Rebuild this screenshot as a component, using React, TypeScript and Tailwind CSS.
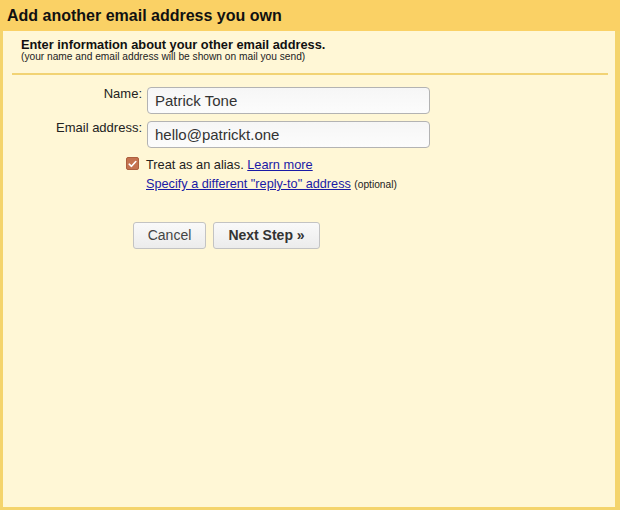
import React from "react";

const font = { fontFamily: '"Liberation Sans", Arial, sans-serif' };

export default function App() {
  return (
    <div className="w-[620px] h-[510px] flex flex-col text-black" style={font}>
      <div className="h-[31px] bg-[#fad165] pl-[7px] text-[16px] font-bold leading-[31px] text-[#111]">
        Add another email address you own
      </div>
      <div className="flex-1 flex flex-col bg-[#fff7d6] border-l-[3px] border-r-[5px] border-b-[3px] border-[#f4d46c]">
        <div className="pl-[18px] pt-[7px]">
          <div className="text-[12.8px] font-bold leading-[14px] text-[#111]">
            Enter information about your other email address.
          </div>
          <div className="text-[10.2px] leading-[10px] text-[#222]">
            (your name and email address will be shown on mail you send)
          </div>
        </div>
        <div className="mt-[11px] ml-[9px] mr-[7px] h-[2px] bg-[#f2d374]" />
        <div className="mt-[12px] flex flex-col">
          <div className="flex items-start gap-[5px]">
            <div className="w-[139px] text-right text-[13px] leading-[13px] text-[#222]">Name:</div>
            <div className="w-[283px] h-[27px] rounded-[4px] border border-[#b3b3b3] bg-gradient-to-b from-[#f6f6f6] to-[#fcfcfc] pl-[7px] text-[15px] leading-[25px] text-[#333]">
              Patrick Tone
            </div>
          </div>
          <div className="mt-[7px] flex items-start gap-[5px]">
            <div className="w-[139px] text-right text-[13px] leading-[13px] text-[#222]">Email address:</div>
            <div className="w-[283px] h-[27px] rounded-[4px] border border-[#b3b3b3] bg-gradient-to-b from-[#f6f6f6] to-[#fcfcfc] pl-[7px] text-[15px] leading-[25px] text-[#333]">
              hello@patrickt.one
            </div>
          </div>
          <div className="mt-[9px] flex items-start gap-[4px]">
            <div className="w-[139px] flex justify-end pr-[3px]">
              <div className="w-[13px] h-[13px] rounded-[2px] bg-[#c4724f] border border-[#ad5f3e] flex items-center justify-center">
                <svg width="9" height="8" viewBox="0 0 9 8">
                  <path d="M1.2 4.2 L3.5 6.3 L7.8 1.5" stroke="#ffffff" strokeWidth="1.6" fill="none" strokeLinecap="round" strokeLinejoin="round" />
                </svg>
              </div>
            </div>
            <div className="text-[12.8px] leading-[15px] text-[#222]">
              Treat as an alias.{" "}
              <span className="text-[#1a1aa6] underline">Learn more</span>
            </div>
          </div>
          <div className="mt-[5px] pl-[143px] text-[12.7px] leading-[15px]">
            <span className="text-[#1a1aa6] underline">Specify a different "reply-to" address</span>{" "}
            <span className="text-[10.2px] text-[#222]">(optional)</span>
          </div>
          <div className="mt-[30px] ml-[130px] flex gap-[7px]">
            <div className="w-[73px] h-[27px] rounded-[3px] border border-[#c3c3c3] bg-gradient-to-b from-[#f9f9f9] to-[#ececec] text-center text-[14px] leading-[25px] text-[#444]">
              Cancel
            </div>
            <div className="w-[107px] h-[27px] rounded-[3px] border border-[#c3c3c3] bg-gradient-to-b from-[#f9f9f9] to-[#ececec] text-center text-[14px] font-bold leading-[25px] text-[#333]">
              Next Step »
            </div>
          </div>
        </div>
      </div>
    </div>
  );
}
